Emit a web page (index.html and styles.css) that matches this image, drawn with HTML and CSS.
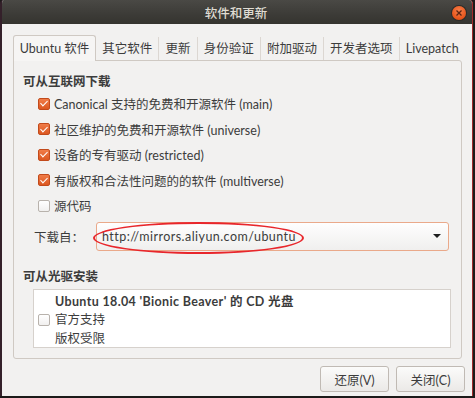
FILE: index.html
```html
<!DOCTYPE html>
<html lang="zh-CN">

<head>
    <meta charset="UTF-8">
    <meta name="viewport" content="width=device-width, initial-scale=1.0">
    <title>软件和更新</title>
    <link rel="stylesheet" href="styles.css">
</head>

<body>
    <div class="window">
        <div class="titlebar">
            <span class="title">软件和更新</span>
            <span class="close">
                <svg width="6" height="6" viewBox="0 0 6 6">
                    <path d="M0.5 0.5 L5.5 5.5 M5.5 0.5 L0.5 5.5" stroke="#5b2412" stroke-width="1.3" />
                </svg>
            </span>
        </div>

        <div class="content">
            <div class="tabs">
                <div class="tab active">Ubuntu 软件</div>
                <div class="tab">其它软件</div>
                <div class="tab">更新</div>
                <div class="tab">身份验证</div>
                <div class="tab">附加驱动</div>
                <div class="tab">开发者选项</div>
                <div class="tab">Livepatch</div>
            </div>

            <div class="panel">
                <div class="section">可从互联网下载</div>
                <div class="checks">
                    <div class="check-row"><span class="box checked"></span>Canonical 支持的免费和开源软件 (main)</div>
                    <div class="check-row"><span class="box checked"></span>社区维护的免费和开源软件 (universe)</div>
                    <div class="check-row"><span class="box checked"></span>设备的专有驱动 (restricted)</div>
                    <div class="check-row"><span class="box checked"></span>有版权和合法性问题的的软件 (multiverse)</div>
                    <div class="check-row"><span class="box"></span>源代码</div>
                </div>

                <div class="source-row">
                    <span class="source-label">下载自：</span>
                    <div class="combo">
                        <span class="combo-text">http://mirrors.aliyun.com/ubuntu</span>
                        <span class="arrow"></span>
                        <span class="ring"></span>
                    </div>
                </div>

                <div class="section section-cd">可从光驱安装</div>
                <div class="cdlist">
                    <div class="cd-item">
                        <span class="box"></span>
                        <div class="cd-text">
                            <div class="cd-name">Ubuntu 18.04 'Bionic Beaver' 的 CD 光盘</div>
                            <div>官方支持</div>
                            <div>版权受限</div>
                        </div>
                    </div>
                </div>
            </div>

            <div class="buttons">
                <button class="btn">还原(V)</button>
                <button class="btn">关闭(C)</button>
            </div>
        </div>
    </div>
</body>

</html>
```

FILE: styles.css
```css
html,
body {
    margin: 0;
    padding: 0;
}

body {
    width: 475px;
    height: 398px;
    background: #1c1a19;
    overflow: hidden;
    font-family: "Lato", "Noto Sans CJK SC", sans-serif;
    font-size: 12.5px;
    color: #3c3c3c;
}

.window {
    width: 470px;
    height: 396px;
    border-left: 2px solid #34202a;
    border-right: 1px solid #a02a2c;
    border-radius: 4px 4px 0 0;
    background: #f2f1f0;
    display: flex;
    flex-direction: column;
    overflow: hidden;
}

/* title bar */
.titlebar {
    height: 24px;
    flex: none;
    display: flex;
    align-items: center;
    justify-content: center;
    position: relative;
    background: linear-gradient(#4a4945, #3c3b37 60%, #35342f);
}

.title {
    color: #dfdbd2;
    font-family: "Noto Sans CJK SC", sans-serif;
    font-weight: 500;
    font-size: 12.5px;
    margin-left: -2px;
}

.close {
    position: absolute;
    right: 6px;
    top: 6px;
    width: 14px;
    height: 14px;
    border-radius: 50%;
    background: radial-gradient(circle at 50% 35%, #f7804c, #e65319 70%, #c9420f);
    box-shadow: 0 0 0 1px #2c2b28;
    display: flex;
    align-items: center;
    justify-content: center;
}

.close svg {
    display: block;
}

.content {
    flex: 1;
    display: flex;
    flex-direction: column;
    padding: 10px 10px 0 11px;
}

/* tabs */
.tabs {
    display: flex;
    height: 26px;
    align-items: flex-end;
}

.tab {
    height: 23px;
    line-height: 23px;
    padding: 0 6.1px;
    border-left: 1px solid #dcd7d2;
    white-space: nowrap;
}

.tab:nth-child(2) {
    border-left: none;
}

.tab.active {
    height: 25px;
    line-height: 26px;
    padding: 0 5.8px;
    border: 1px solid #cfc9c3;
    border-bottom: none;
    border-radius: 3px 3px 0 0;
    background: #f6f5f4;
    margin-bottom: -1px;
    position: relative;
    z-index: 1;
}

/* panel */
.panel {
    border: 1px solid #cfc9c3;
    border-radius: 0 3px 3px 3px;
    padding: 12px 10px 9px 9px;
    height: 276px;
}

.section {
    font-weight: bold;
    line-height: 18px;
}

.checks {
    padding-left: 15px;
}

.check-row {
    height: 25.5px;
    display: flex;
    align-items: center;
    white-space: nowrap;
}

.box {
    width: 10px;
    height: 10px;
    border: 1px solid #b8b2ac;
    border-radius: 2px;
    background: linear-gradient(#ffffff, #f1f0ef);
    margin-right: 4px;
    flex: none;
    position: relative;
}

.box.checked {
    border-color: #c24a1b;
    background: linear-gradient(#f07c48, #dc5720);
}

.box.checked::after {
    content: "";
    position: absolute;
    left: 2.5px;
    top: 0.5px;
    width: 3px;
    height: 6px;
    border: solid #fff;
    border-width: 0 1.6px 1.6px 0;
    transform: rotate(45deg);
}

.source-row {
    display: flex;
    align-items: center;
    margin-top: 3px;
    padding-left: 11px;
}

.source-label {
    width: 62px;
}

.combo {
    position: relative;
    width: 353px;
    height: 29px;
    box-sizing: border-box;
    border: 1px solid #eaa98a;
    border-radius: 3px;
    background: linear-gradient(#fefefe, #f0efee);
    display: flex;
    align-items: center;
    padding: 0 6px 0 5px;
}

.combo-text {
    flex: 1;
    letter-spacing: 0.45px;
}

.arrow {
    width: 0;
    height: 0;
    border-left: 4px solid transparent;
    border-right: 4px solid transparent;
    border-top: 4px solid #1e1e1e;
    margin-right: 1px;
}

.ring {
    position: absolute;
    left: -4px;
    top: -1px;
    width: 207px;
    height: 28px;
    border: 2px solid #e8262b;
    border-radius: 50%;
    pointer-events: none;
}

.section-cd {
    margin-top: 17px;
    margin-bottom: 3px;
}

.cdlist {
    margin: 0 0 0 10px;
    height: 57px;
    width: 416px;
    border: 1px solid #d6d1cc;
    background: #fff;
    overflow: hidden;
}

.cd-item {
    display: flex;
    align-items: center;
    padding: 3px 0 0 4px;
}

.cd-item .box {
    margin-right: 5px;
}

.cd-text div {
    line-height: 18.5px;
}

.cd-name {
    font-weight: bold;
    letter-spacing: 0.35px;
}

/* buttons */
.buttons {
    display: flex;
    justify-content: flex-end;
    gap: 7px;
    margin-top: 7px;
    margin-right: -3px;
}

.btn {
    font-family: inherit;
    font-size: 12.5px;
    color: #3c3c3c;
    height: 26px;
    width: 69px;
    border: 1px solid #c0bab4;
    border-radius: 3px;
    background: linear-gradient(#fbfbfa, #ebe9e7);
    padding: 0;
}
```
